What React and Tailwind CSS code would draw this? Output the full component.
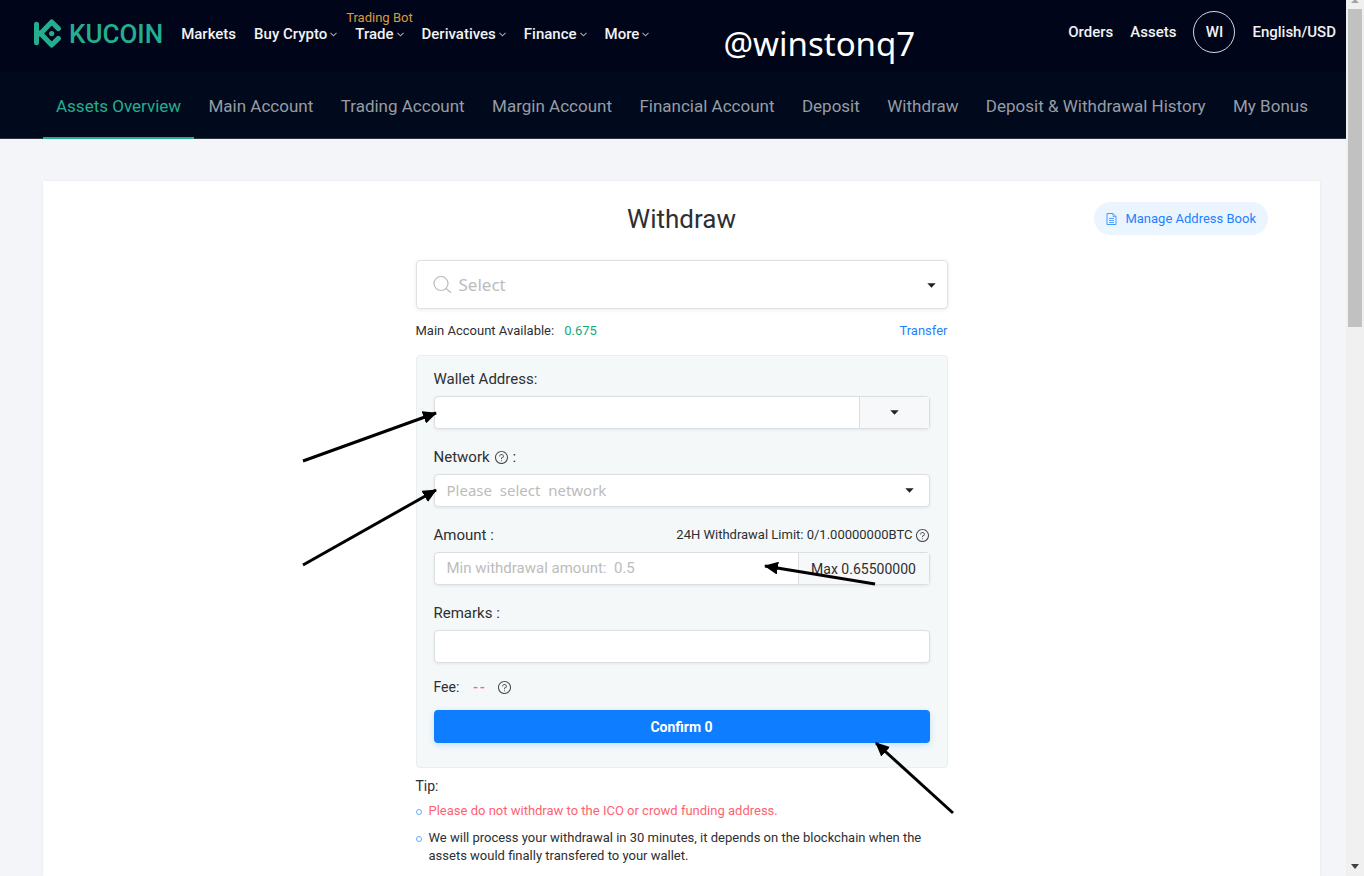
import React, { useState } from 'react';
import { AiOutlineQuestionCircle } from 'react-icons/ai';

const mainNav = [
    { label: 'Markets' },
    { label: 'Buy Crypto', menu: true },
    { label: 'Trade', menu: true, badge: 'Trading Bot' },
    { label: 'Derivatives', menu: true },
    { label: 'Finance', menu: true },
    { label: 'More', menu: true }
];

const assetTabs = [
    'Assets Overview',
    'Main Account',
    'Trading Account',
    'Margin Account',
    'Financial Account',
    'Deposit',
    'Withdraw',
    'Deposit & Withdrawal History',
    'My Bonus'
];

const fieldBox = 'h-[33px] w-full rounded-sm border border-[#dcdfe2] bg-white shadow-[0_1px_3px_rgba(0,20,42,0.08)]';

function Logo() {
    return (
        <a href="#home" className="flex items-center gap-2 text-[#24ae8f]" aria-label="KuCoin">
            <svg width="28" height="30" viewBox="0 0 28 30" fill="none" stroke="currentColor" strokeWidth="5" strokeLinecap="round" strokeLinejoin="round">
                <path d="M3.5 5.2V23.8" />
                <path d="M25.4 9.6L18.7 3L7.6 14.5L18.7 26L25.4 19.4" />
                <path d="M4 11L7.6 14.5L4 18" strokeWidth="3" />
                <circle cx="18.7" cy="14.5" r="2.6" fill="currentColor" stroke="none" />
            </svg>
            <span className="text-[26px] leading-7 font-medium">KUCOIN</span>
        </a>
    );
}

function Chevron() {
    return (
        <svg width="7" height="5" viewBox="0 0 7 5" fill="none" stroke="#a5a8b0" strokeWidth="1.1">
            <path d="M0.5 0.8L3.5 3.8L6.5 0.8" />
        </svg>
    );
}

function Caret({ className = '' }) {
    return (
        <svg className={`pointer-events-none ${className}`} width="9" height="5" viewBox="0 0 9 5" fill="#222">
            <path d="M0.3 0.3H8.7L4.5 4.8Z" />
        </svg>
    );
}

function Header() {
    return (
        <header className="flex h-[72px] items-center bg-[#010519] pr-[10px] pl-[33px] text-[15px] font-medium text-[#f1f2f4]">
            <div className="flex items-center gap-[18px] pb-1">
                <Logo />
                <nav className="flex items-center gap-[18px]">
                    {mainNav.map((item) => (
                        <a key={item.label} href="#nav" className="relative flex items-center gap-[3px] leading-5 whitespace-nowrap">
                            {item.badge && (
                                <span className="absolute bottom-[18px] left-1/2 -translate-x-1/2 text-[13px] leading-4 font-normal text-[#dd9a3c]">
                                    {item.badge}
                                </span>
                            )}
                            {item.label}
                            {item.menu && <Chevron />}
                        </a>
                    ))}
                </nav>
            </div>
            <span className="ml-[74px] pt-4 font-['Noto_Sans',sans-serif] text-[33px] leading-10 font-normal text-white">@winstonq7</span>
            <div className="ml-auto flex items-center gap-[17px] pb-2">
                <a href="#orders">Orders</a>
                <a href="#assets">Assets</a>
                <button type="button" className="h-[42px] w-[42px] rounded-full border border-[#d5d7db]">WI</button>
                <button type="button">English/USD</button>
            </div>
        </header>
    );
}

function AssetTabs() {
    const [active, setActive] = useState('Assets Overview');

    return (
        <nav className="flex h-[67px] justify-between border-b border-[#2c3443] bg-[#000a1c] pr-[25px] pl-[43px]">
            {assetTabs.map((tab) => (
                <a
                    key={tab}
                    href="#tab"
                    onClick={() => setActive(tab)}
                    className={`-mb-px border-b-2 px-[13px] pt-[22px] text-[17px] leading-6 whitespace-nowrap ${tab === active ? 'border-[#24ae8f] text-[#24ae8f]' : 'border-transparent text-[#989ca4]'}`}
                >
                    {tab}
                </a>
            ))}
        </nav>
    );
}

function Help() {
    return (
        <button type="button" aria-label="Help" className="text-[#4c4f54]">
            <AiOutlineQuestionCircle size={15} />
        </button>
    );
}

// Hand-drawn pointers over the form
function Pointers() {
    return (
        <svg className="pointer-events-none absolute top-0 left-0 overflow-visible" width="532" height="412" stroke="#000" strokeWidth="3">
            <defs>
                <marker id="head" markerUnits="userSpaceOnUse" markerWidth="14" markerHeight="13" refX="13" refY="6.5" orient="auto">
                    <path d="M0 0L14 6.5L0 13Z" fill="#000" stroke="none" />
                </marker>
            </defs>
            <path d="M-114 105L19 57" markerEnd="url(#head)" />
            <path d="M-114 209L19 134" markerEnd="url(#head)" />
            <path d="M458 228L348 210" markerEnd="url(#head)" />
            <path d="M536 457L459 387" markerEnd="url(#head)" />
        </svg>
    );
}

function WithdrawForm() {
    const [address, setAddress] = useState('');
    const [amount, setAmount] = useState('');
    const [remarks, setRemarks] = useState('');

    return (
        <form
            onSubmit={(e) => e.preventDefault()}
            className="relative mt-[15px] rounded-sm border border-[#e9eef0] bg-[#f4f8f9] px-[17px] pt-[13px] pb-6 text-[15px] text-[#2d2f33]"
        >
            <label htmlFor="address" className="mb-[7px] block leading-5">Wallet Address:</label>
            <div className={`${fieldBox} flex`}>
                <input id="address" value={address} onChange={(e) => setAddress(e.target.value)} className="min-w-0 flex-1 px-3 outline-none" />
                <button type="button" aria-label="Address book" className="flex w-[70px] items-center justify-center border-l border-[#dcdfe2] bg-[#f7f8fa]">
                    <Caret />
                </button>
            </div>

            <div className="mt-[18px] mb-[7px] flex items-center gap-1 leading-5">
                <label htmlFor="network">Network</label>
                <Help />
                <span>:</span>
            </div>
            <div className="relative">
                <select id="network" defaultValue="" className={`${fieldBox} block appearance-none px-3 font-['Noto_Sans',sans-serif] text-[15px] text-[#bcbcbc] outline-none`}>
                    <option value="">{'Please\u00a0 select\u00a0 network'}</option>
                </select>
                <Caret className="absolute top-[14px] right-4" />
            </div>

            <div className="mt-[18px] mb-[7px] flex items-center justify-between leading-5">
                <label htmlFor="amount">Amount :</label>
                <div className="flex items-center gap-[2px] text-[13px]">
                    <span>24H Withdrawal Limit: 0/1.00000000BTC</span>
                    <Help />
                </div>
            </div>
            <div className={`${fieldBox} flex`}>
                <input
                    id="amount"
                    value={amount}
                    onChange={(e) => setAmount(e.target.value)}
                    placeholder={'Min withdrawal amount:\u00a0 0.5'}
                    className="min-w-0 flex-1 px-3 outline-none placeholder:text-[#bcbcbc]"
                />
                <button type="button" onClick={() => setAmount('0.65500000')} className="w-[131px] border-l border-[#dcdfe2] bg-[#f7f8fa] text-sm">
                    Max 0.65500000
                </button>
            </div>

            <label htmlFor="remarks" className="mt-[18px] mb-[7px] block leading-5">Remarks :</label>
            <input id="remarks" value={remarks} onChange={(e) => setRemarks(e.target.value)} className={`${fieldBox} block px-3 outline-none`} />

            <div className="mt-[14px] mb-[13px] flex items-center text-sm leading-5">
                <span>Fee:</span>
                <span className="mr-3 ml-[14px] flex gap-[2px] font-medium text-[#ff6270]"><span>-</span><span>-</span></span>
                <Help />
            </div>
            <button type="submit" className="block h-[33px] w-full rounded-sm bg-[#0f7dff] text-sm font-bold text-white shadow-[0_2px_6px_rgba(15,125,255,0.2)]">
                Confirm 0
            </button>
            <Pointers />
        </form>
    );
}

function Tip({ className = '', children }) {
    return (
        <li className={`flex gap-[7px] leading-[18px] ${className}`}>
            <span className="mt-[7px] h-[6px] w-[6px] shrink-0 rounded-full border border-[#62acff]" />
            <span>{children}</span>
        </li>
    );
}

function Scrollbar() {
    return (
        <div className="flex w-[18px] shrink-0 flex-col items-center bg-[#f0f0f0]" aria-hidden="true">
            <svg width="8" height="9" viewBox="0 0 8 9" fill="#a3a3a3"><path d="M0 3L4 -1L8 3Z" /></svg>
            <div className="w-[14px] basis-[318px] bg-[#c1c1c1]" />
            <svg className="mt-auto mb-2" width="8" height="5" viewBox="0 0 8 5" fill="#404040"><path d="M0 0H8L4 5Z" /></svg>
        </div>
    );
}

export default function App() {
    return (
        <div className="flex min-h-screen font-[Roboto,sans-serif]">
            <div className="min-w-0 flex-1 bg-[#f3f5f9]">
                <Header />
                <AssetTabs />
                <main className="mt-[42px] mr-[26px] ml-[43px] border-b border-[#e8eaec] bg-white pt-[21px] pb-[11px] shadow-[0_0_3px_rgba(0,20,42,0.06)]">
                    <div className="grid h-[33px] grid-cols-[1fr_auto_1fr] items-center">
                        <h1 className="col-start-2 text-[26px] leading-8 text-[#2d2f33]">Withdraw</h1>
                        <button type="button" className="mr-[52px] flex h-[33px] items-center gap-2 justify-self-end rounded-full bg-[#ebf5ff] px-3 text-[13px] text-[#1f80ff]">
                            <svg width="11" height="12" viewBox="0 0 11 12" fill="none" stroke="#459aff">
                                <path d="M1 0.5H7L10 3.5V11.5H1Z" />
                                <path d="M7 0.5V3.5H10" strokeWidth="0.8" />
                                <path d="M3 5.5H8M3 7.5H8M3 9.5H8" strokeWidth="0.9" />
                            </svg>
                            Manage Address Book
                        </button>
                    </div>

                    <section className="mx-auto mt-[25px] w-full max-w-[532px] text-[13px] text-[#2d2f33]">
                        <div className="relative">
                            <select
                                aria-label="Select coin"
                                defaultValue=""
                                className="block h-[49px] w-full appearance-none rounded-sm border border-[#dfe1e3] bg-white pl-[42px] font-['Noto_Sans',sans-serif] text-[17px] text-[#bcbcbc] shadow-[0_1px_4px_rgba(0,20,42,0.08)] outline-none"
                            >
                                <option value="">Select</option>
                            </select>
                            <svg className="pointer-events-none absolute top-4 left-[17px]" width="19" height="18" viewBox="0 0 19 18" fill="none" stroke="#bcbcbc" strokeWidth="1.2">
                                <circle cx="8" cy="7.5" r="7" />
                                <path d="M13 12.5L18 16.8" />
                            </svg>
                            <Caret className="absolute top-[23px] right-3" />
                        </div>
                        <div className="mt-[13px] flex leading-[18px]">
                            <span>Main Account Available:</span>
                            <span className="ml-[10px] text-[#18a87a]">0.675</span>
                            <a href="#transfer" className="ml-auto text-[#1f80ff]">Transfer</a>
                        </div>
                        <WithdrawForm />
                        <p className="mt-2 text-sm leading-5">Tip:</p>
                        <ul className="mt-[6px] flex flex-col gap-[9px]">
                            <Tip className="text-[#ff6270]">Please do not withdraw to the ICO or crowd funding address.</Tip>
                            <Tip>We will process your withdrawal in 30 minutes, it depends on the blockchain when the assets would finally transfered to your wallet.</Tip>
                        </ul>
                    </section>
                </main>
            </div>
            <Scrollbar />
        </div>
    );
}
